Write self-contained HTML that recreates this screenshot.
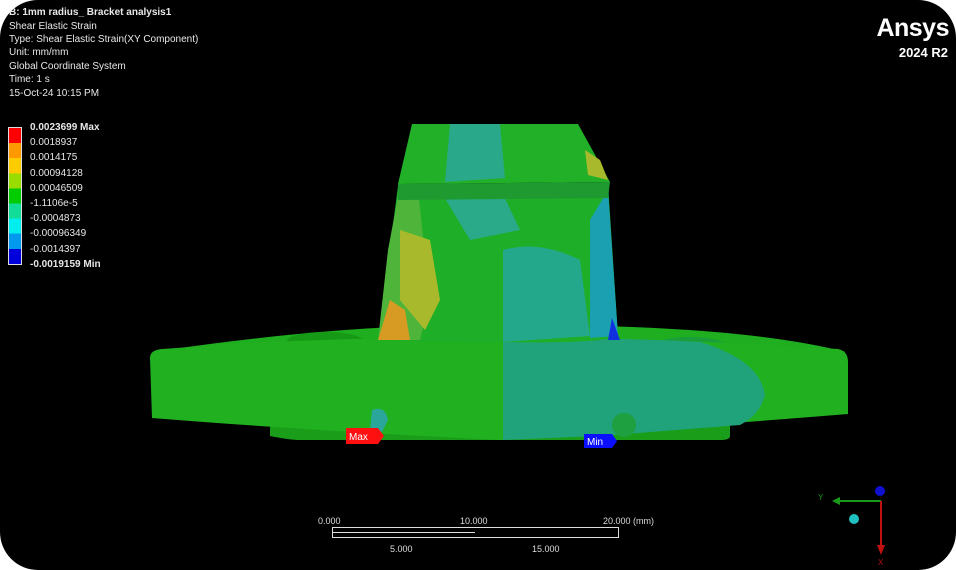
<!DOCTYPE html>
<html><head><meta charset="utf-8"><style>
html,body{margin:0;padding:0;background:#fff;}
#v{position:relative;width:956px;height:570px;background:#000;border-radius:38px;overflow:hidden;font-family:"Liberation Sans",sans-serif;color:#e8e8e8;}
.t{position:absolute;left:9px;font-size:10px;line-height:13.4px;white-space:nowrap}
.leg{position:absolute;left:30px;font-size:10px;line-height:15.2px}
</style></head><body>
<div id="v">
<svg width="956" height="570" style="position:absolute;left:0;top:0">
 <path d="M152,352 Q300,330 420,326 L600,326 Q760,330 846,352 Q700,344 500,340 Q300,342 152,352Z" fill="#1fae1f"/>
 <ellipse cx="325" cy="341" rx="38" ry="9" fill="#169a16"/>
 <ellipse cx="690" cy="346" rx="36" ry="9" fill="#1a9e3a"/>
 <path d="M270,420 L270,436 Q290,440 300,440 L720,440 Q730,440 730,436 L730,420Z" fill="#1a9e1a"/>
 <path d="M150,358 Q150,350 162,349 Q330,336 500,338 Q680,338 838,349 Q848,351 848,362 L848,414 Q700,426 500,440 Q300,430 152,418 Z" fill="#20b020"/>
 <path d="M503,338 Q640,338 700,342 Q760,360 765,395 Q760,415 740,425 L600,436 L503,440Z" fill="#20a37a"/>
 <path d="M372,410 Q385,405 388,420 L382,432 L370,432Z" fill="#2aa79a"/>
 <circle cx="624" cy="425" r="12" fill="#1ea040"/>
 <path d="M398,186 L608,184 L618,336 Q600,344 500,342 Q420,342 378,340 Z" fill="#1fae28"/>
 <path d="M400,186 L418,190 L430,300 L420,340 L378,340 L388,250Z" fill="#4fb43a"/>
 <path d="M390,300 L405,310 L410,340 L378,340Z" fill="#d79a22"/>
 <path d="M400,230 L430,240 L440,300 L425,330 L400,300Z" fill="#a8ba2c"/>
 <path d="M503,250 Q540,240 580,260 L590,336 L503,342Z" fill="#24a88c"/>
 <path d="M590,220 L608,190 L618,336 L590,338 Z" fill="#1aa0b0"/>
 <path d="M612,318 L620,340 L608,340Z" fill="#1030e0"/>
 <path d="M440,190 L500,188 L520,230 L470,240Z" fill="#2aaa88"/>
 <path d="M412,124 L578,124 L610,182 L398,184Z" fill="#22b028"/>
 <path d="M450,124 L500,124 L505,178 L445,182Z" fill="#2aa98a"/>
 <path d="M585,150 L600,160 L608,180 L588,175Z" fill="#a8ba2c"/>
 <path d="M398,184 L610,182 L608,198 L398,200Z" fill="#1f9a30"/>
 <path d="M346,428 L378,428 L384,436 L378,444 L346,444Z" fill="#ff1010"/>
 <text x="349" y="440" font-size="10" fill="#fff" font-family="Liberation Sans">Max</text>
 <path d="M584,434 L612,434 L617,441 L612,448 L584,448Z" fill="#0a10ff"/>
 <text x="587" y="445" font-size="10" fill="#fff" font-family="Liberation Sans">Min</text>
 <rect x="332.5" y="527.5" width="286" height="10" fill="none" stroke="#ddd" stroke-width="1"/>
 <line x1="332" y1="532.5" x2="475" y2="532.5" stroke="#ddd"/>
 <g font-size="9" fill="#ddd" font-family="Liberation Sans">
 <text x="318" y="524">0.000</text><text x="460" y="524">10.000</text><text x="603" y="524">20.000 (mm)</text>
 <text x="390" y="552">5.000</text><text x="532" y="552">15.000</text></g>
 <line x1="881" y1="501" x2="836" y2="501" stroke="#1a9a1a" stroke-width="2"/>
 <path d="M832,501 L840,497 L840,505Z" fill="#1a9a1a"/>
 <text x="818" y="500" font-size="8" fill="#1a9a1a">Y</text>
 <line x1="881" y1="501" x2="881" y2="548" stroke="#c01010" stroke-width="2"/>
 <path d="M877,545 L885,545 L881,555Z" fill="#c01010"/>
 <text x="878" y="565" font-size="8" fill="#c01010">X</text>
 <circle cx="880" cy="491" r="5" fill="#1010d0"/>
 <circle cx="854" cy="519" r="5" fill="#20c0c0"/>
</svg>
<div class="t" style="top:6px;font-weight:bold">B: 1mm radius_ Bracket analysis1</div>
<div class="t" style="top:19.5px">Shear Elastic Strain<br>Type: Shear Elastic Strain(XY Component)<br>Unit: mm/mm<br>Global Coordinate System<br>Time: 1 s<br>15-Oct-24 10:15 PM</div>
<div style="position:absolute;left:8px;top:127px;width:14px;height:138px;border:1px solid #ddd;box-sizing:border-box;background:linear-gradient(#f00 0 11.1%,#f90 11.1% 22.2%,#fc0 22.2% 33.3%,#9d0 33.3% 44.4%,#0c0 44.4% 55.5%,#1d9 55.5% 66.6%,#0ee 66.6% 77.7%,#09e 77.7% 88.8%,#00d 88.8% 100%)"></div>
<div class="leg" style="top:120px"><b>0.0023699 Max</b><br>0.0018937<br>0.0014175<br>0.00094128<br>0.00046509<br>-1.1106e-5<br>-0.0004873<br>-0.00096349<br>-0.0014397<br><b>-0.0019159 Min</b></div>
<div style="position:absolute;right:7px;top:14px;font-size:25px;font-weight:bold;color:#fff;letter-spacing:-0.5px">Ansys</div>
<div style="position:absolute;right:8px;top:45px;font-size:13px;font-weight:bold;color:#fff">2024 R2</div>
</div>
</body></html>
